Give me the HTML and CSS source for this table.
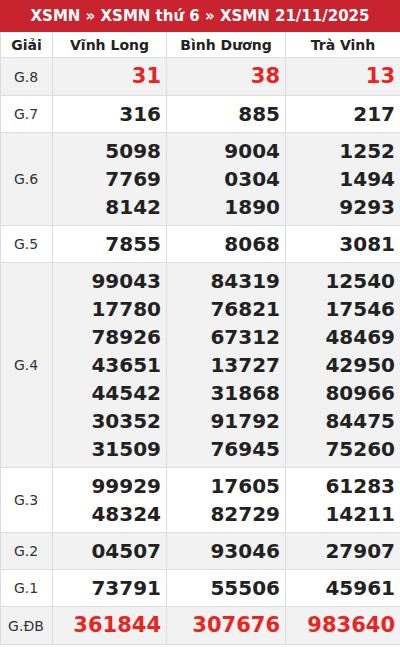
FILE: index.html
```html
<!DOCTYPE html>
<html lang="vi">
<head>
<meta charset="utf-8">
<link rel="stylesheet" href="styles.css">
</head>
<body>
<div class="box">
  <h2 class="title">XSMN » XSMN thứ 6 » XSMN 21/11/2025</h2>
  <table class="kq">
    <colgroup>
      <col class="c-prize"><col class="c-a"><col class="c-b"><col class="c-c">
    </colgroup>
    <thead>
      <tr><th>Giải</th><th>Vĩnh Long</th><th>Bình Dương</th><th>Trà Vinh</th></tr>
    </thead>
    <tbody>
      <tr class="alt"><td class="p">G.8</td><td class="n red big">31</td><td class="n red big">38</td><td class="n red big">13</td></tr>
      <tr><td class="p">G.7</td><td class="n">316</td><td class="n">885</td><td class="n">217</td></tr>
      <tr class="alt"><td class="p">G.6</td><td class="n">5098<br>7769<br>8142</td><td class="n">9004<br>0304<br>1890</td><td class="n">1252<br>1494<br>9293</td></tr>
      <tr><td class="p">G.5</td><td class="n">7855</td><td class="n">8068</td><td class="n">3081</td></tr>
      <tr class="alt"><td class="p">G.4</td><td class="n">99043<br>17780<br>78926<br>43651<br>44542<br>30352<br>31509</td><td class="n">84319<br>76821<br>67312<br>13727<br>31868<br>91792<br>76945</td><td class="n">12540<br>17546<br>48469<br>42950<br>80966<br>84475<br>75260</td></tr>
      <tr><td class="p">G.3</td><td class="n">99929<br>48324</td><td class="n">17605<br>82729</td><td class="n">61283<br>14211</td></tr>
      <tr class="alt"><td class="p">G.2</td><td class="n">04507</td><td class="n">93046</td><td class="n">27907</td></tr>
      <tr><td class="p">G.1</td><td class="n">73791</td><td class="n">55506</td><td class="n">45961</td></tr>
      <tr class="alt"><td class="p">G.ĐB</td><td class="n red big">361844</td><td class="n red big">307676</td><td class="n red big">983640</td></tr>
    </tbody>
  </table>
</div>
</body>
</html>
```
FILE: styles.css
```css
html, body {
  margin: 0;
  padding: 0;
  background: #fff;
}
body {
  font-family: "DejaVu Sans", sans-serif;
  color: #222;
}
.box {
  width: 400px;
}
.title {
  margin: 0;
  height: 32px;
  line-height: 32px;
  background: #c8232f;
  color: #fff;
  font-size: 15px;
  font-weight: bold;
  text-align: center;
}
.kq {
  width: 400px;
  border-collapse: collapse;
  table-layout: fixed;
  border: 1px solid #dcdde2;
  border-top: 0;
}
.c-prize { width: 52px; }
.c-a { width: 114px; }
.c-b { width: 119px; }
.c-c { width: 115px; }
.kq th {
  height: 25px;
  padding: 0;
  font-size: 14px;
  font-weight: bold;
  color: #222;
  text-align: center;
  border: 1px solid #dcdde2;
  border-top: 0;
}
.kq td {
  border: 1px solid #dcdde2;
  padding: 4px 5px 4px 4px;
  vertical-align: middle;
}
.kq tr.alt td { background: #f2f2f3; }
.p {
  font-size: 14px;
  text-align: center;
  color: #333;
}
.n {
  font-size: 20px;
  font-weight: bold;
  line-height: 28px;
  text-align: right;
  color: #222;
}
.n.big {
  font-size: 21px;
  line-height: 29px;
}
.red { color: #e8261f; }
```
